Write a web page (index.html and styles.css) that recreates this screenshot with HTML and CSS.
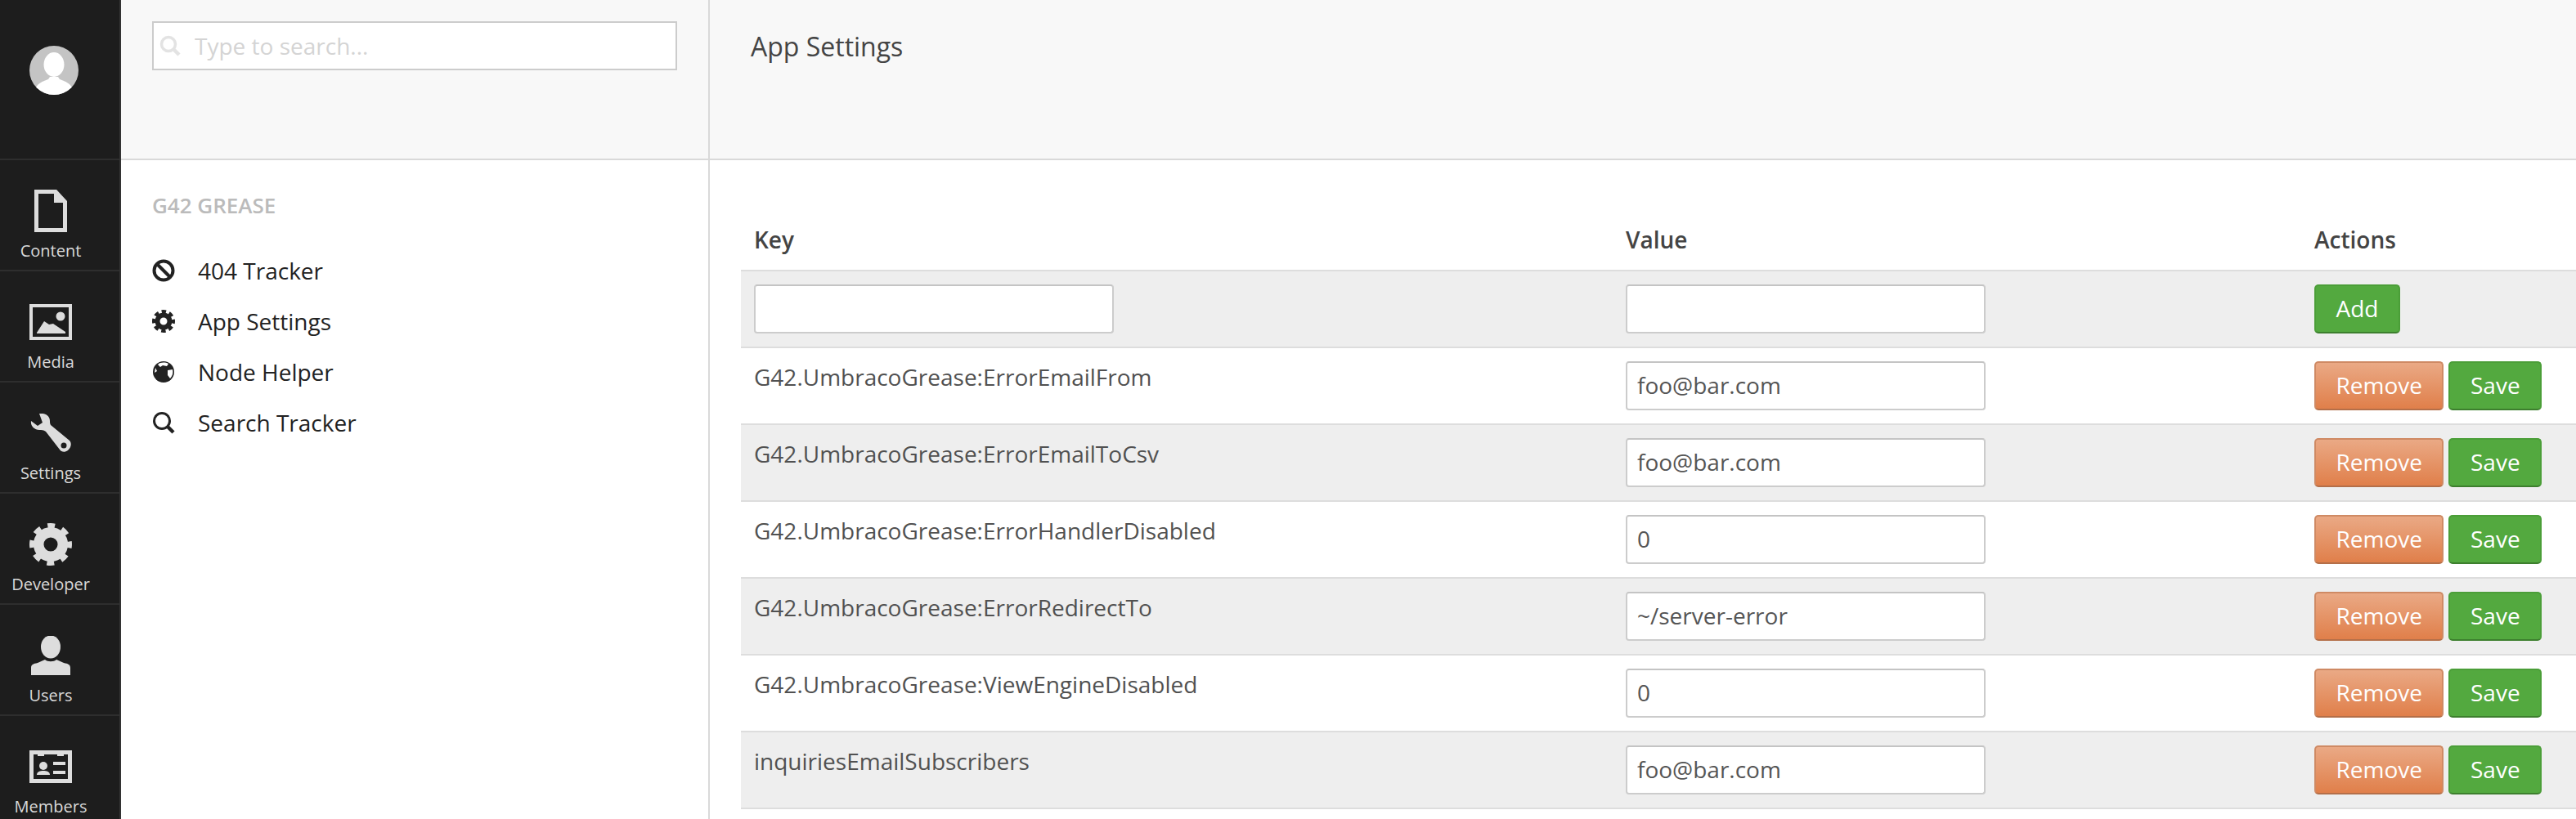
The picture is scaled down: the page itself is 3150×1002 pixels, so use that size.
FILE: index.html
```html
<!doctype html>
<html lang="en">
<head>
<title>App Settings</title>
<meta name="viewport" content="width=device-width, initial-scale=1">
<link rel="stylesheet" href="styles.css">
</head>
<body>
<aside class="sections">
<div class="avatar-wrap">
<svg class="avatar" viewBox="0 0 60 60"><defs><clipPath id="round"><circle cx="30" cy="30" r="30"/></clipPath></defs><g clip-path="url(#round)"><rect width="60" height="60" fill="#c4c4c4"/><ellipse cx="30" cy="23" rx="12.500" ry="15" fill="#fff"/><path d="M6 60c0-13 9-16 17-19l2-3h10l2 3c8 3 17 6 17 19z" fill="#fff"/></g></svg>
</div>
<a class="section">
<span class="section-icon"><svg width="40" height="52" viewBox="0 0 40 52"><path d="M2.500 2.500H26L37.500 15V49.500H2.500Z" fill="none" stroke="#ddd" stroke-width="5"/><path d="M24 2H27L38 14V16H24Z" fill="#ddd"/></svg></span>
<span class="section-name">Content</span>
</a>
<a class="section">
<span class="section-icon"><svg width="52" height="44" viewBox="0 0 52 44"><rect x="2" y="2" width="48" height="40" fill="none" stroke="#ddd" stroke-width="4"/><circle cx="38" cy="15" r="5.500" fill="#ddd"/><path d="M9 35L18 21L24 25L29 24L44 34V36H9Z" fill="#ddd"/></svg></span>
<span class="section-name">Media</span>
</a>
<a class="section">
<span class="section-icon"><svg width="50" height="48" viewBox="0 0 50 48"><path d="M11 0C17-1 24 2 24 9C24 11 24 12 25 14L48 33C51 36 50 42 46 45C42 48 38 47 36 44L19 22C16 20 14 20 11 20C5 20 0 15 1 9L9 15L15 11Z" fill="#ddd"/><circle cx="41" cy="39" r="3.500" fill="#1d1d1d"/></svg></span>
<span class="section-name">Settings</span>
</a>
<a class="section">
<span class="section-icon"><svg width="52" height="52" viewBox="0 0 52 52"><circle cx="26" cy="26" r="14.800" fill="none" stroke="#ddd" stroke-width="12.500"/><circle cx="26" cy="26" r="23" fill="none" stroke="#ddd" stroke-width="6" stroke-dasharray="9 9.060" stroke-dashoffset="4.500"/></svg></span>
<span class="section-name">Developer</span>
</a>
<a class="section">
<span class="section-icon"><svg width="48" height="48" viewBox="0 0 48 48"><ellipse cx="24" cy="13.500" rx="12" ry="14" fill="#ddd"/><path d="M0 48V39C0 35 3 34 8 33L17 29C20 32 28 32 31 29L40 33C45 34 48 35 48 39V48Z" fill="#ddd"/></svg></span>
<span class="section-name">Users</span>
</a>
<a class="section">
<span class="section-icon"><svg width="52" height="40" viewBox="0 0 52 40"><path d="M2.500 2.500H49.500V37.500H2.500Z" fill="none" stroke="#ddd" stroke-width="5"/><path d="M10 2H18V7H10ZM34 2H42V7H34Z" fill="#ddd"/><circle cx="17" cy="19" r="5" fill="#ddd"/><path d="M9 30C9 26 13 25 17 25C21 25 25 26 25 30Z" fill="#ddd"/><path d="M29 14H44V18H29ZM29 25H44V29H29Z" fill="#ddd"/></svg></span>
<span class="section-name">Members</span>
</a>
</aside>

<div class="tree">
<div class="tree-head">
<div class="search">
<svg width="26" height="26" viewBox="0 0 26 26"><circle cx="11" cy="11" r="8.500" fill="none" stroke="#e3e3e3" stroke-width="3.500"/><path d="M17 17L24 24" stroke="#e3e3e3" stroke-width="4.500"/></svg>
<input type="text" placeholder="Type to search...">
</div>
</div>
<div class="tree-body">
<h5>G42 GREASE</h5>
<ul>
<li><svg width="28" height="28" viewBox="0 0 28 28"><circle cx="14" cy="14" r="11.500" fill="none" stroke="#222" stroke-width="4"/><path d="M6 6L22 22" stroke="#222" stroke-width="4"/></svg>404 Tracker</li>
<li><svg width="28" height="28" viewBox="0 0 28 28"><circle cx="14" cy="14" r="7.500" fill="none" stroke="#222" stroke-width="6"/><circle cx="14" cy="14" r="12" fill="none" stroke="#222" stroke-width="4" stroke-dasharray="5.500 3.925" stroke-dashoffset="2.750"/></svg>App Settings</li>
<li><svg width="28" height="28" viewBox="0 0 28 28"><circle cx="14" cy="14" r="13" fill="#222"/><path d="M7 5C10 2 16 2 20 4L18 7L13 6L10 8ZM19 12L25 11C26 15 25 19 22 22L19 18ZM4 9L6 13L3 15Z" fill="#fff"/></svg>Node Helper</li>
<li><svg width="28" height="28" viewBox="0 0 28 28"><circle cx="12" cy="12" r="9.500" fill="none" stroke="#222" stroke-width="3"/><path d="M18 18L26 26" stroke="#222" stroke-width="4.500"/></svg>Search Tracker</li>
</ul>
</div>
</div>

<main class="main">
<div class="main-head"><h1>App Settings</h1></div>
<div class="main-body">
<table>
<colgroup><col class="col-key"><col class="col-value"><col></colgroup>
<thead>
<tr><th>Key</th><th>Value</th><th>Actions</th></tr>
</thead>
<tbody>
<tr>
<td><input type="text" class="field"></td>
<td><input type="text" class="field"></td>
<td><button class="btn save">Add</button></td>
</tr>
<tr>
<td>G42.UmbracoGrease:ErrorEmailFrom</td>
<td><input type="text" class="field" value="foo@bar.com"></td>
<td><button class="btn remove">Remove</button><button class="btn save">Save</button></td>
</tr>
<tr>
<td>G42.UmbracoGrease:ErrorEmailToCsv</td>
<td><input type="text" class="field" value="foo@bar.com"></td>
<td><button class="btn remove">Remove</button><button class="btn save">Save</button></td>
</tr>
<tr>
<td>G42.UmbracoGrease:ErrorHandlerDisabled</td>
<td><input type="text" class="field" value="0"></td>
<td><button class="btn remove">Remove</button><button class="btn save">Save</button></td>
</tr>
<tr>
<td>G42.UmbracoGrease:ErrorRedirectTo</td>
<td><input type="text" class="field" value="~/server-error"></td>
<td><button class="btn remove">Remove</button><button class="btn save">Save</button></td>
</tr>
<tr>
<td>G42.UmbracoGrease:ViewEngineDisabled</td>
<td><input type="text" class="field" value="0"></td>
<td><button class="btn remove">Remove</button><button class="btn save">Save</button></td>
</tr>
<tr>
<td>inquiriesEmailSubscribers</td>
<td><input type="text" class="field" value="foo@bar.com"></td>
<td><button class="btn remove">Remove</button><button class="btn save">Save</button></td>
</tr>
</tbody>
</table>
</div>
</main>
</body>
</html>
```

FILE: styles.css
```css
* { box-sizing:border-box; margin:0; padding:0; }
html, body { height:100%; overflow:hidden; }
body { display:flex; font-family:'Open Sans', sans-serif; font-size:28px; color:#515151; background:#fff; }

.sections { width:148px; flex-shrink:0; background:#1d1d1d; border-right:2px solid #333; color:#d9d9d9; }
.avatar-wrap { height:196px; padding:56px 0 0 36px; border-bottom:2px solid #2e2e2e; }
.avatar { display:block; width:60px; height:60px; }
.section { display:block; width:100%; height:136px; padding:36px 22px 0 0; border-bottom:2px solid #2e2e2e; text-align:center; }
.section-icon { display:flex; height:52px; align-items:center; justify-content:center; }
.section-name { display:block; margin-top:8px; font-size:20px; line-height:30px; }

.tree { width:720px; flex-shrink:0; border-right:2px solid #d9d9d9; }
.tree-head { height:196px; padding:26px 38px 0; background:#f8f8f8; border-bottom:2px solid #d9d9d9; }
.search { display:flex; align-items:center; height:60px; padding-left:7px; background:#fff; border:2px solid #ccc; }
.search input { flex:1; min-width:0; margin-left:17px; border:0; outline:0; font:inherit; background:none; }
.search input::placeholder { color:#d4d4d4; opacity:1; }
.tree-body { padding:38px 38px 0; }
.tree-body h5 { font-size:26px; line-height:34px; font-weight:600; color:#bbb; }
.tree-body ul { list-style:none; margin-top:32px; }
.tree-body li { display:flex; align-items:center; column-gap:28px; height:62px; font-size:28px; color:#222; }

.main { flex:1; min-width:0; }
.main-head { height:196px; padding:36px 0 0 50px; background:#f8f8f8; border-bottom:2px solid #d9d9d9; }
.main-head h1 { font-size:32px; line-height:42px; font-weight:400; color:#444; }
.main-body { padding:62px 0 0 38px; }

table { width:100%; table-layout:fixed; border-collapse:separate; border-spacing:0; }
.col-key { width:1065px; }
.col-value { width:842px; }
th, td { padding:16px 17px; line-height:38px; text-align:left; vertical-align:top; border-bottom:2px solid #ddd; white-space:nowrap; }
th:first-child, td:first-child { padding-left:16px; }
th { padding-bottom:18px; font-weight:600; color:#444; }
tbody tr:nth-child(odd) { background:#eee; }

.field { display:block; width:440px; height:60px; padding:0 12px 2px; font:inherit; color:#555; background:#fff; border:2px solid #ccc; border-top-color:#c4c4c4; border-radius:4px; outline:0; }

.btn { display:inline-block; height:60px; padding:0 24.5px 2px; margin-right:6px; font:inherit; color:#fff; border:2px solid; border-radius:5px; vertical-align:top; }
.save { background:#53a93f; border-color:#4b9e38 #4b9e38 #3d7f2e; }
.remove { background:linear-gradient(#eaa985, #e07f4a); border-color:#cf8a64 #cf8a64 #b46f49; }
```
